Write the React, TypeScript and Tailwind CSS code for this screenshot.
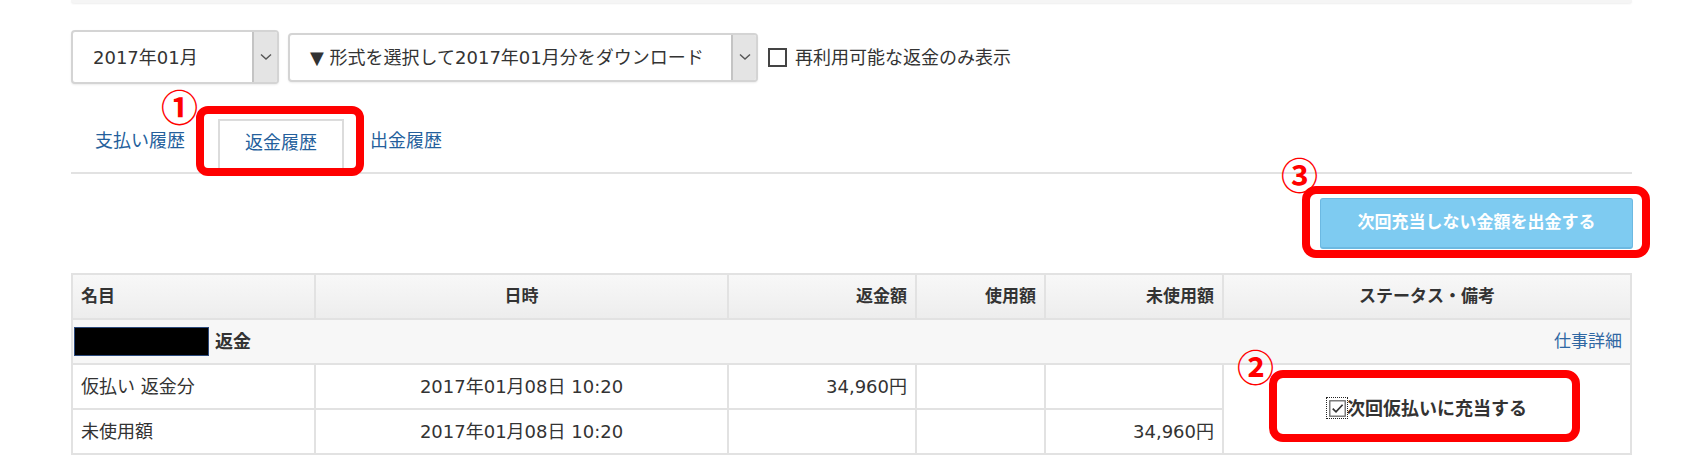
import React from 'react'

// Refund history screen with red annotation marks

const FONT = "font-['DejaVu_Sans','Noto_Sans_CJK_JP',sans-serif]"

function Chevron() {
  return (
    <svg width="12" height="8" viewBox="0 0 12 8" fill="none">
      <path d="M1 1.5 L6 6 L11 1.5" stroke="#555" strokeWidth="1.4" />
    </svg>
  )
}

function SelectBox({ label, width, height }: { label: string; width: string; height: string }) {
  return (
    <div className={`flex ${width} ${height} rounded-[4px] border-2 border-[#d4d4d4] bg-white shadow-[0_1px_2px_rgba(0,0,0,0.08)] overflow-hidden`}>
      <div className="flex flex-1 items-center pl-[20px] text-[18px] text-[#333]">{label}</div>
      <div className="flex w-[25px] items-center justify-center border-l-2 border-[#c4c4c4] bg-[#e4e4e4]">
        <Chevron />
      </div>
    </div>
  )
}

function Mark({ children, className }: { children: React.ReactNode; className: string }) {
  return (
    <div className={`absolute font-['Noto_Sans_CJK_JP',sans-serif] text-[37px] font-bold leading-none text-[#ff0000] ${className}`}>
      {children}
    </div>
  )
}

export default function App() {
  const th = 'border-2 border-[#e2e2e2] px-2 font-bold text-[17px] text-[#333]'
  const td = 'border-2 border-[#e2e2e2] px-2 text-[18px] text-[#333]'

  return (
    <div className={`relative h-[471px] w-[1698px] overflow-hidden bg-white ${FONT}`}>
      <div className="ml-[71px] w-[1561px]">
        {/* top panel edge */}
        <div className="h-[3px] rounded-b-[3px] bg-[#f5f5f5] shadow-[0_1px_2px_rgba(0,0,0,0.07)]" />

        {/* filters */}
        <div className="mt-[27px] flex items-center">
          <SelectBox label="2017年01月" width="w-[208px]" height="h-[54px]" />
          <div className="ml-[9px]">
            <SelectBox label="▼ 形式を選択して2017年01月分をダウンロード" width="w-[470px]" height="h-[49px]" />
          </div>
          <div className="ml-[10px] h-[19px] w-[19px] border-2 border-[#444] bg-white" />
          <span className="ml-[8px] text-[18px] text-[#333]">再利用可能な返金のみ表示</span>
        </div>

        {/* tabs */}
        <div className="mt-[35px] flex h-[55px] border-b-2 border-[#e2e2e2] text-[18px] text-[#245f9c]">
          <div className="flex w-[147px] items-center pb-[10px] pl-[24px]">支払い履歴</div>
          <div className="-mb-[2px] flex w-[126px] items-center justify-center border-x-2 border-t-2 border-[#dcdcdc] bg-white pb-[10px]">
            返金履歴
          </div>
          <div className="flex items-center pb-[10px] pl-[26px]">出金履歴</div>
        </div>

        {/* withdraw button */}
        <div className="mt-[24px] flex justify-end">
          <button className="mr-[-1px] h-[51px] w-[313px] rounded-[3px] border border-b-2 border-[#6cb9e2] bg-[#7ecbf1] text-[17px] font-bold text-white">
            次回充当しない金額を出金する
          </button>
        </div>

        {/* table */}
        <table className="mt-[24px] w-full border-collapse">
          <colgroup>
            <col className="w-[243px]" />
            <col className="w-[413px]" />
            <col className="w-[188px]" />
            <col className="w-[129px]" />
            <col className="w-[178px]" />
            <col />
          </colgroup>
          <thead>
            <tr className="h-[45px] bg-gradient-to-b from-[#f8f8f8] to-[#ededed]">
              <th className={`${th} text-left`}>名目</th>
              <th className={`${th} text-center`}>日時</th>
              <th className={`${th} text-right`}>返金額</th>
              <th className={`${th} text-right`}>使用額</th>
              <th className={`${th} text-right`}>未使用額</th>
              <th className={`${th} text-center`}>ステータス・備考</th>
            </tr>
          </thead>
          <tbody>
            <tr className="h-[45px] bg-[#f7f7f7]">
              <td colSpan={6} className="border-2 border-[#e2e2e2] pl-[1px] pr-2">
                <div className="flex items-center justify-between">
                  <div className="flex items-center">
                    <span className="inline-block h-[29px] w-[135px] border border-[#2c4a7c] bg-black" />
                    <span className="ml-[6px] text-[18px] font-bold text-[#333]">返金</span>
                  </div>
                  <span className="text-[17px] text-[#2f67a3]">仕事詳細</span>
                </div>
              </td>
            </tr>
            <tr className="h-[45px] bg-white">
              <td className={`${td} text-left`}>仮払い 返金分</td>
              <td className={`${td} text-center`}>2017年01月08日 10:20</td>
              <td className={`${td} text-right`}>34,960円</td>
              <td className={td}></td>
              <td className={td}></td>
              <td rowSpan={2} className={`${td} text-center`}>
                <span className="inline-flex items-center font-bold">
                  <span className="inline-flex h-[20px] w-[20px] items-center justify-center outline-1 outline-dotted outline-[#222]">
                    <svg width="17" height="17" viewBox="0 0 16 16" fill="none">
                      <rect x="0.75" y="0.75" width="14.5" height="14.5" stroke="#666" strokeWidth="1.2" fill="white" />
                      <path d="M3.5 8.2 L6.6 11.2 L12.8 4.5" stroke="#333" strokeWidth="1.6" />
                    </svg>
                  </span>
                  次回仮払いに充当する
                </span>
              </td>
            </tr>
            <tr className="h-[45px] bg-white">
              <td className={`${td} text-left`}>未使用額</td>
              <td className={`${td} text-center`}>2017年01月08日 10:20</td>
              <td className={td}></td>
              <td className={td}></td>
              <td className={`${td} text-right`}>34,960円</td>
            </tr>
          </tbody>
        </table>
      </div>

      {/* annotations */}
      <div className="absolute left-[196px] top-[106px] h-[70px] w-[168px] rounded-[12px] border-[8px] border-[#ff0000]" />
      <div className="absolute left-[1302px] top-[186px] h-[72px] w-[348px] rounded-[14px] border-[8px] border-[#ff0000]" />
      <div className="absolute left-[1269px] top-[370px] h-[72px] w-[311px] rounded-[14px] border-[8px] border-[#ff0000]" />
      <Mark className="left-[161px] top-[88px]">①</Mark>
      <Mark className="left-[1237px] top-[348px]">②</Mark>
      <Mark className="left-[1281px] top-[156px]">③</Mark>
    </div>
  )
}
